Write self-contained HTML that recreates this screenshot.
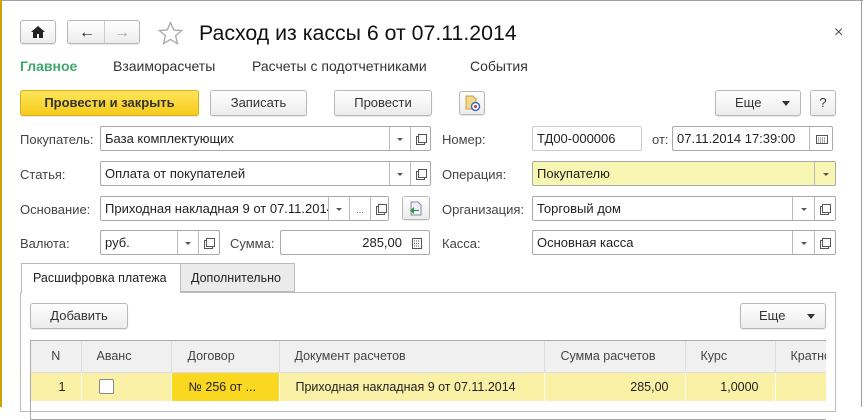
<!DOCTYPE html>
<html><head><meta charset="utf-8"><style>
*{box-sizing:border-box;margin:0;padding:0}
body{width:863px;height:407px;overflow:hidden;background:#fff;font-family:"Liberation Sans",sans-serif;font-size:13px;color:#333;position:relative}
.a{position:absolute}
.btn{position:absolute;border:1px solid #b8b8b8;border-radius:3px;background:linear-gradient(#fff,#ececec);text-align:center;color:#333;box-shadow:0 1px 1px rgba(0,0,0,.1)}
.lbl{position:absolute;color:#444;font-size:13px}
.fld{position:absolute;border:1px solid #aaa;border-radius:2px;background:#fff;height:25px;line-height:23px;padding-left:4px;color:#222;overflow:hidden;white-space:nowrap}
.sub{position:absolute;top:0;height:23px;border-left:1px solid #bbb;text-align:center;font-size:9px;color:#555}
.dd::after{content:"";position:absolute;left:50%;top:11px;margin-left:-3px;border:3px solid transparent;border-top:3px solid #555}
.op::after{content:"";position:absolute;left:7px;top:7px;width:7px;height:7px;border:1px solid #555;background:#fff;box-shadow:-2px 2px 0 -1px #fff,-2px 2px 0 0 #555}
th,td{font-weight:normal}
</style></head><body>
<div class="a" style="left:0;top:0;width:863px;height:1px;background:#a0a0a0"></div>
<div class="a" style="left:0;top:0;width:2px;height:407px;background:#c8a400"></div>
<div class="a" style="left:861px;top:0;width:1px;height:407px;background:#a0a0a0"></div>

<div class="btn" style="left:20px;top:20px;width:36px;height:24px"><svg width="14" height="12" style="margin-top:5px" viewBox="0 0 14 12"><path d="M7 0L0 6h2v6h4V8h2v4h4V6h2z" fill="#222"/></svg></div>
<div class="btn" style="left:67px;top:20px;width:73px;height:24px"></div>
<div class="a" style="left:104px;top:21px;width:1px;height:22px;background:#ccc"></div>
<div class="a" style="left:79px;top:24px;font-size:16px;color:#222;font-weight:bold">&#8592;</div>
<div class="a" style="left:114px;top:24px;font-size:16px;color:#aaa;font-weight:bold">&#8594;</div>
<svg class="a" style="left:158px;top:21px" width="25" height="25" viewBox="0 0 24 24"><path d="M12 1.5l3.1 7.1 7.6.6-5.8 5 1.8 7.5L12 17.7 5.3 21.7l1.8-7.5-5.8-5 7.6-.6z" fill="none" stroke="#aaa" stroke-width="1.3"/></svg>
<div class="a" style="left:199px;top:21px;font-size:21.3px;color:#111">Расход из кассы 6 от 07.11.2014</div>
<div class="a" style="left:834px;top:24px;font-size:16px;color:#555">×</div>

<div class="a" style="left:20px;top:58px;font-size:14px;font-weight:bold;color:#3fa86b">Главное</div>
<div class="a" style="left:113px;top:58px;font-size:14px;color:#333">Взаиморасчеты</div>
<div class="a" style="left:252px;top:58px;font-size:14px;color:#333">Расчеты с подотчетниками</div>
<div class="a" style="left:470px;top:58px;font-size:14px;color:#333">События</div>

<div class="btn" style="left:20px;top:90px;width:179px;height:26px;line-height:24px;background:linear-gradient(#ffe55a,#f6cb1a);border-color:#d8ae1a;font-weight:bold;color:#333">Провести и закрыть</div>
<div class="btn" style="left:210px;top:90px;width:97px;height:26px;line-height:24px">Записать</div>
<div class="btn" style="left:334px;top:90px;width:98px;height:26px;line-height:24px">Провести</div>
<div class="btn" style="left:459px;top:91px;width:26px;height:24px"><svg width="18" height="18" style="margin-top:2px" viewBox="0 0 18 18"><path d="M3 2h7l3 3v10H3z" fill="#f3d98a" stroke="#c9a040"/><circle cx="12.5" cy="12.5" r="4" fill="#fff" stroke="#3a6ec0" stroke-width="1.5"/><circle cx="12.5" cy="12.5" r="1.5" fill="#d03030"/></svg></div>
<div class="btn" style="left:715px;top:90px;width:86px;height:26px;line-height:24px;text-align:left;padding-left:19px">Еще<span style="position:absolute;right:10px;top:10px;border:4px solid transparent;border-top:5px solid #333"></span></div>
<div class="btn" style="left:810px;top:90px;width:26px;height:26px;line-height:24px">?</div>

<div class="lbl" style="left:20px;top:132px">Покупатель:</div>
<div class="fld" style="left:100px;top:126px;width:331px">База комплектующих<div class="sub dd" style="left:288px;width:21px"></div><div class="sub op" style="left:309px;width:21px"></div></div>
<div class="lbl" style="left:442px;top:132px">Номер:</div>
<div class="fld" style="left:532px;top:126px;width:110px;border-color:#ccc">ТД00-000006</div>
<div class="lbl" style="left:652px;top:132px">от:</div>
<div class="fld" style="left:672px;top:126px;width:161px">07.11.2014 17:39:00<div class="sub" style="left:136px;width:24px"><svg width="12" height="9" style="margin-top:8px" viewBox="0 0 12 9"><rect x=".5" y=".5" width="11" height="8" fill="none" stroke="#555"/><path d="M2 3h8M2 5h8M2 7h8" stroke="#555" stroke-dasharray="1 1"/></svg></div></div>

<div class="lbl" style="left:20px;top:167px">Статья:</div>
<div class="fld" style="left:100px;top:161px;width:331px">Оплата от покупателей<div class="sub dd" style="left:288px;width:21px"></div><div class="sub op" style="left:309px;width:21px"></div></div>
<div class="lbl" style="left:442px;top:167px">Операция:</div>
<div class="fld" style="left:532px;top:161px;width:304px;background:#f7f6b2">Покупателю<div class="sub dd" style="left:281px;width:22px"></div></div>

<div class="lbl" style="left:20px;top:202px">Основание:</div>
<div class="fld" style="left:100px;top:196px;width:289px">Приходная накладная 9 от 07.11.2014<div class="sub dd" style="left:227px;width:21px;background:#fff"></div><div class="sub" style="left:248px;width:21px;background:#fff;line-height:26px">...</div><div class="sub op" style="left:269px;width:19px;background:#fff"></div></div>
<div class="btn" style="left:402px;top:196px;width:28px;height:24px"><svg width="16" height="16" style="margin-top:3px" viewBox="0 0 16 16"><path d="M3 2h7l3 3v10H3z" fill="#eef" stroke="#88a"/><path d="M11 10H6V7L2 10.5 6 14v-3h5z" fill="#2a9a3a"/></svg></div>
<div class="lbl" style="left:442px;top:202px">Организация:</div>
<div class="fld" style="left:532px;top:196px;width:304px">Торговый дом<div class="sub dd" style="left:259px;width:22px"></div><div class="sub op" style="left:281px;width:22px"></div></div>

<div class="lbl" style="left:20px;top:236px">Валюта:</div>
<div class="fld" style="left:100px;top:230px;width:120px">руб.<div class="sub dd" style="left:76px;width:21px"></div><div class="sub op" style="left:97px;width:21px"></div></div>
<div class="lbl" style="left:230px;top:236px">Сумма:</div>
<div class="fld" style="left:280px;top:230px;width:150px;text-align:right;padding-right:27px">285,00<div class="sub" style="left:124px;width:24px;border-left:none"><svg width="10" height="11" style="margin-top:7px" viewBox="0 0 10 11"><rect x=".5" y=".5" width="9" height="10" fill="none" stroke="#555"/><path d="M2 3h6M2 5.5h6M2 8h6" stroke="#555" stroke-dasharray="1 1"/></svg></div></div>
<div class="lbl" style="left:442px;top:236px">Касса:</div>
<div class="fld" style="left:532px;top:230px;width:304px">Основная касса<div class="sub dd" style="left:259px;width:22px"></div><div class="sub op" style="left:281px;width:22px"></div></div>

<div class="a" style="left:20px;top:292px;width:816px;height:120px;border:1px solid #bbb"></div>
<div class="a" style="left:21px;top:263px;width:160px;height:30px;border:1px solid #bbb;border-bottom:none;background:#fff;padding:7px 0 0 11px;font-size:12.5px;color:#222">Расшифровка платежа</div>
<div class="a" style="left:180px;top:263px;width:115px;height:29px;border:1px solid #bbb;background:#ebebeb;padding:7px 0 0 10px;font-size:12.5px;color:#222">Дополнительно</div>

<div class="btn" style="left:30px;top:303px;width:98px;height:26px;line-height:24px">Добавить</div>
<div class="btn" style="left:740px;top:303px;width:86px;height:26px;line-height:24px;text-align:left;padding-left:18px">Еще<span style="position:absolute;right:10px;top:10px;border:4px solid transparent;border-top:5px solid #333"></span></div>

<div class="a" style="left:30px;top:340px;width:796px;height:80px;border:1px solid #aaa;border-right:none;overflow:hidden">
<table style="border-collapse:collapse;width:820px;font-size:12.5px;color:#444;table-layout:fixed">
<colgroup><col style="width:50px"><col style="width:90px"><col style="width:108px"><col style="width:265px"><col style="width:141px"><col style="width:90px"><col style="width:76px"></colgroup>
<tr style="height:31px;background:#f0f0f0"><th style="border-right:1px solid #ddd;border-bottom:1px solid #ddd">N</th><th style="text-align:left;padding-left:15px;border-right:1px solid #ddd;border-bottom:1px solid #ddd">Аванс</th><th style="text-align:left;padding-left:16px;border-right:1px solid #ddd;border-bottom:1px solid #ddd">Договор</th><th style="text-align:left;padding-left:15px;border-right:1px solid #ddd;border-bottom:1px solid #ddd">Документ расчетов</th><th style="text-align:left;padding-left:16px;border-right:1px solid #ddd;border-bottom:1px solid #ddd">Сумма расчетов</th><th style="text-align:left;padding-left:15px;border-right:1px solid #ddd;border-bottom:1px solid #ddd">Курс</th><th style="text-align:left;padding-left:15px;border-bottom:1px solid #ddd">Кратность</th></tr>
<tr style="height:29px;background:#fbf1a6;color:#222"><td style="text-align:right;padding-right:15px;border-right:1px solid #fff">1</td><td style="border-right:1px solid #fff;padding-left:17px"><span style="display:inline-block;width:15px;height:15px;border:1px solid #888;border-radius:2px;background:#fff;vertical-align:middle"></span></td><td style="background:#f9d81f;padding-left:17px;border-right:1px solid #fff">№ 256 от ...</td><td style="padding-left:16px;border-right:1px solid #fff">Приходная накладная 9 от 07.11.2014</td><td style="text-align:right;padding-right:16px;border-right:1px solid #fff">285,00</td><td style="text-align:right;padding-right:16px;border-right:1px solid #fff">1,0000</td><td></td></tr>
</table></div>
</body></html>
